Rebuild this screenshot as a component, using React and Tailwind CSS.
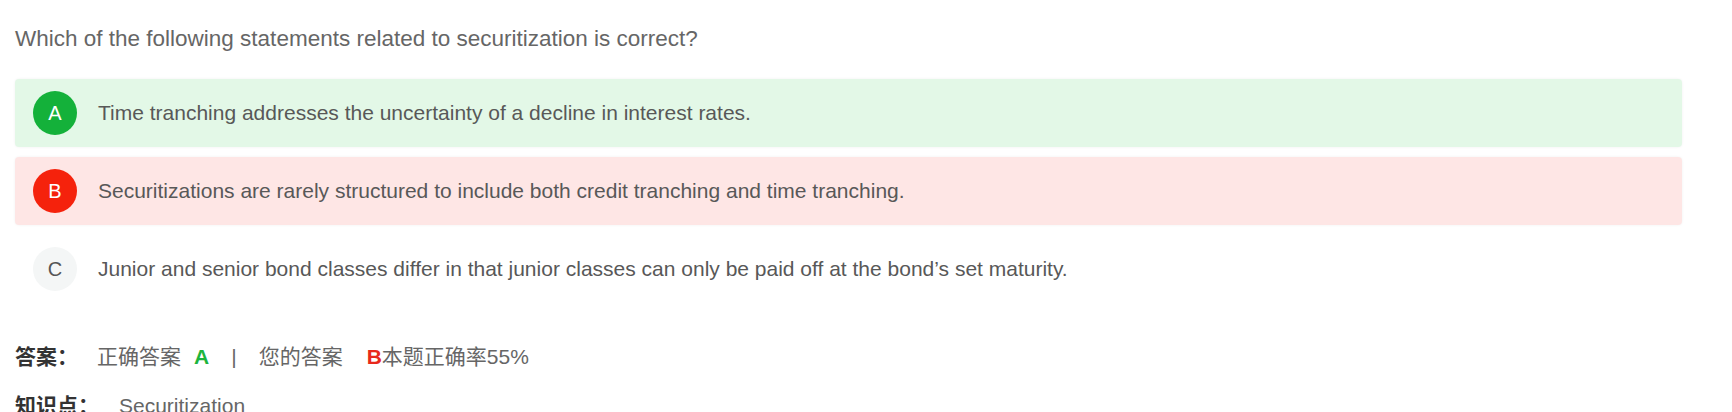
import React from 'react';

const options = [
  { key: 'A', text: 'Time tranching addresses the uncertainty of a decline in interest rates.', state: 'correct' },
  { key: 'B', text: 'Securitizations are rarely structured to include both credit tranching and time tranching.', state: 'wrong' },
  { key: 'C', text: 'Junior and senior bond classes differ in that junior classes can only be paid off at the bond’s set maturity.', state: 'none' },
];

const rowStyles = {
  correct: 'bg-[#e3f8e7] shadow-[0_0_3px_rgba(0,0,0,0.06)]',
  wrong: 'bg-[#fee6e5] shadow-[0_0_3px_rgba(0,0,0,0.06)]',
  none: 'bg-white',
};

const circleStyles = {
  correct: 'bg-[#14b13a] text-white',
  wrong: 'bg-[#f5220c] text-white',
  none: 'bg-[#f4f6f6] text-[#555]',
};

const App = () => {
  return (
    <div className="w-[1732px] h-[412px] overflow-hidden bg-white font-['Liberation_Sans','Noto_Sans_CJK_SC',sans-serif] text-[#666]">
      <div className="w-[1667px] ml-[15px]">
        {/* question */}
        <div className="pt-[25px] text-[22.5px] leading-[28px] text-[#666]">
          Which of the following statements related to securitization is correct?
        </div>

        {/* options */}
        <div className="mt-[26px] flex flex-col gap-[10px]">
          {options.map((opt) => (
            <div key={opt.key} className={`h-[68px] rounded-[4px] flex items-center pl-[18px] ${rowStyles[opt.state]}`}>
              <div className={`w-[44px] h-[44px] rounded-full flex items-center justify-center text-[20px] ${circleStyles[opt.state]}`}>
                {opt.key}
              </div>
              <span className="ml-[21px] text-[21px] text-[#585858]">{opt.text}</span>
            </div>
          ))}
        </div>

        {/* answer */}
        <div className="mt-[39px] flex items-baseline h-[26px] text-[21px] leading-[26px]">
          <span className="font-bold text-[#333] w-[82px] font-['Noto_Sans_CJK_SC',sans-serif]">答案：</span>
          <span className="text-[#666]">正确答案</span>
          <span className="ml-[13px] font-bold text-[#1db43d]">A</span>
          <span className="ml-[22px] text-[#666]">|</span>
          <span className="ml-[22px] text-[#666]">您的答案</span>
          <span className="ml-[24px] font-bold text-[#e8291c]">B</span>
          <span className="text-[#666]">本题正确率55%</span>
        </div>

        {/* knowledge point */}
        <div className="mt-[23px] flex items-baseline h-[26px] text-[21px] leading-[26px]">
          <span className="font-bold text-[#333] w-[104px] font-['Noto_Sans_CJK_SC',sans-serif]">知识点：</span>
          <span className="text-[#666]">Securitization</span>
        </div>
      </div>
    </div>
  );
};

export default App;
